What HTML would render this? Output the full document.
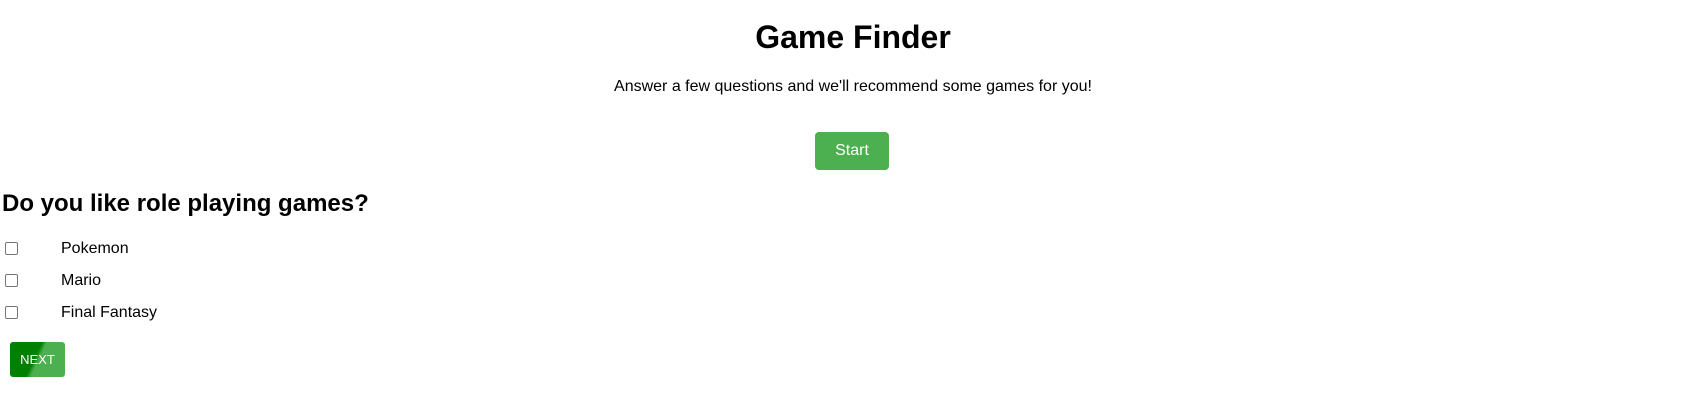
<!DOCTYPE html>
<html><head><style>
body{margin:0;font-family:"Liberation Sans",Arial,sans-serif;color:#000;background:#fff;width:1706px;height:403px;overflow:hidden;position:relative}
.a{position:absolute;white-space:nowrap}
h1{position:absolute;left:0;width:1706px;text-align:center;top:17px;margin:0;font-size:32px;line-height:40px}
.sub{left:0;width:1706px;text-align:center;top:77px;font-size:16px;line-height:20px}
.start{left:815px;top:132px;width:74px;height:38px;background:#4CAF50;color:#fff;border-radius:4px;font-size:16px;line-height:38px;text-align:center}
h2{position:absolute;left:2px;top:189px;margin:0;font-size:24px;line-height:30px}
.cb{left:5px;width:11px;height:11px;border:1px solid #767676;border-radius:2px;background:#fff}
.lb{left:61px;font-size:16px;line-height:20px}
.next{left:10px;top:342px;width:55px;height:35px;border-radius:3px;background:linear-gradient(115deg,#008000 0,#008000 45%,#4CAF50 52%,#4CAF50 100%);color:#fff;font-size:13px;line-height:35px;text-align:center}
</style></head><body>
<h1>Game Finder</h1>
<div class="a sub">Answer a few questions and we'll recommend some games for you!</div>
<div class="a start">Start</div>
<h2>Do you like role playing games?</h2>
<div class="a cb" style="top:242px"></div><div class="a lb" style="top:239px">Pokemon</div>
<div class="a cb" style="top:274px"></div><div class="a lb" style="top:271px">Mario</div>
<div class="a cb" style="top:306px"></div><div class="a lb" style="top:303px">Final Fantasy</div>
<div class="a next">NEXT</div>
</body></html>
